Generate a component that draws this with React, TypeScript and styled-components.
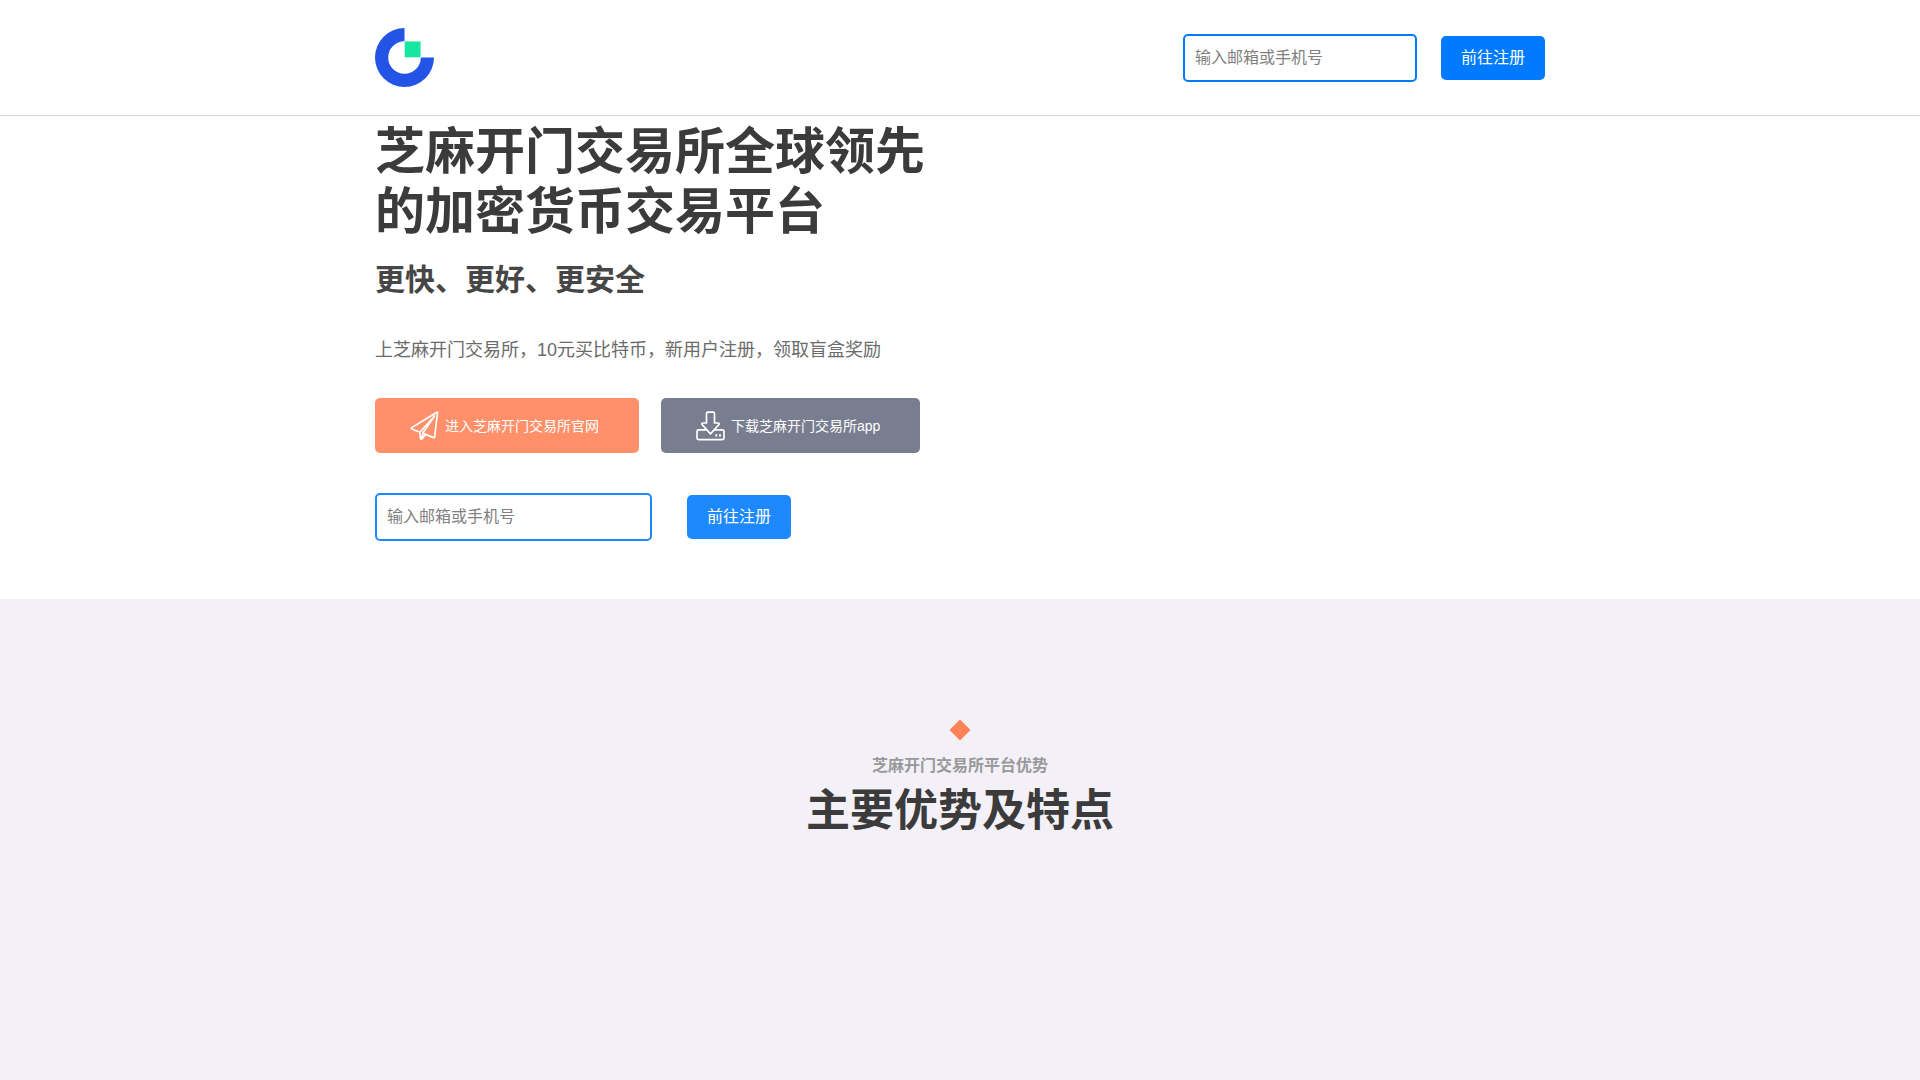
import React from "react";
import styled, { createGlobalStyle } from "styled-components";

const GlobalStyle = createGlobalStyle`
  *, *::before, *::after { box-sizing: border-box; }
  body {
    margin: 0;
    background: #fff;
    color: #3b3b3b;
    font-family: "Liberation Sans", "Noto Sans CJK SC", sans-serif;
    font-size: 16px;
    line-height: 24px;
  }
  h1, h2, h3, p { margin: 0; }
`;

const Page = styled.div`
  display: flex;
  flex-direction: column;
  min-height: 100vh;
`;

const Main = styled.main`
  display: flex;
  flex: 1;
  flex-direction: column;
`;

const Container = styled.div`
  width: 100%;
  max-width: 1200px;
  margin: 0 auto;
  padding: 0 15px;
`;

const Header = styled.header`
  border-bottom: 1px solid #d9d9d9;
`;

const HeaderBar = styled(Container)`
  display: flex;
  align-items: center;
  justify-content: space-between;
  min-height: 115px;
`;

const LogoLink = styled.a`
  display: block;
  line-height: 0;
`;

const SignupForm = styled.form<{ $gap: number }>`
  display: flex;
  align-items: center;
  gap: ${(p) => p.$gap}px;
`;

const AccountInput = styled.input<{ $width: number; $tone: string }>`
  width: ${(p) => p.$width}px;
  height: 48px;
  padding: 10px;
  border: 2px solid ${(p) => p.$tone};
  border-radius: 5px;
  background: #fff;
  font: inherit;
  outline: none;
  &::placeholder { color: #808080; opacity: 1; }
`;

const SubmitButton = styled.button<{ $tone: string }>`
  padding: 10px 20px;
  border: 0;
  border-radius: 5px;
  background: ${(p) => p.$tone};
  color: #fff;
  font: inherit;
  cursor: pointer;
`;

const Hero = styled.section`
  padding: 6px 0 58px;
`;

const HeroText = styled.div`
  display: flex;
  flex-direction: column;
  width: 50%;
  min-width: 570px;
`;

const HeroTitle = styled.h1`
  font-size: 50px;
  line-height: 60px;
  font-weight: 700;
`;

const HeroSubtitle = styled.h3`
  margin-top: 20px;
  font-size: 30px;
  line-height: 36px;
  font-weight: 700;
  color: #464646;
`;

const HeroLead = styled.p`
  margin: 38px 0 34px;
  font-size: 18px;
  line-height: 28px;
  color: #6b6b6b;
`;

const ActionRow = styled.div`
  display: flex;
  gap: 22px;
  margin-bottom: 40px;
`;

const ActionLink = styled.a<{ $tone: string }>`
  display: flex;
  align-items: center;
  gap: 6px;
  height: 55px;
  padding: 0 40px 0 35px;
  border-radius: 5px;
  background: ${(p) => p.$tone};
  color: #fff;
  font-size: 14px;
  text-decoration: none;
  white-space: nowrap;
`;

const Features = styled.section`
  display: flex;
  flex: 1;
  flex-direction: column;
  align-items: center;
  padding: 120px 15px;
  background: #f3f0f8;
  text-align: center;
`;

const Diamond = styled.svg`
  display: block;
  margin-bottom: 13px;
`;

const FeaturesLabel = styled.p`
  font-weight: 700;
  color: #999;
`;

const FeaturesTitle = styled.h2`
  margin-top: 6px;
  font-size: 44px;
  line-height: 54px;
  font-weight: 700;
`;

const Logo = () => (
  <svg width="59" height="59" viewBox="0 0 59 59" role="img" aria-label="Gate">
    <path
      fill="#2354e6"
      d="M29.5 0A29.5 29.5 0 1 0 59 29.5H45.8A16.3 16.3 0 1 1 29.5 13.2Z"
    />
    <path fill="#17e6a1" stroke="#fff" strokeWidth=".4" d="M29.5 13.2h16.3v16.3H29.5z" />
  </svg>
);

const PlaneIcon = () => (
  <svg width="29" height="30" viewBox="0 0 29 30" fill="none" stroke="#fff" strokeWidth="1.7" strokeLinejoin="round" strokeLinecap="round" aria-hidden="true">
    <path d="M27.2 1.2Q27.6 1.2 27.5 2L24.6 26Q24.4 27 23.5 26.6L15.6 23.4 12 27.9Q10.6 29 10.3 27.2L9.9 21.2 1.8 18Q.8 17.4 1.8 16.6L26.4 1.5Q27 1.1 27.2 1.2Z" />
    <path d="M24.5 5 9.9 21.2M24.5 5 13.2 21.6 11.4 27.5M13.2 22.3 15.6 23.4" />
  </svg>
);

const DownloadIcon = () => (
  <svg width="29" height="30" viewBox="0 0 29 30" fill="none" stroke="#fff" strokeWidth="1.7" strokeLinejoin="round" strokeLinecap="round" aria-hidden="true">
    <path d="M12 1.2h5a1.5 1.5 0 0 1 1.5 1.5V12h3.8a.9.9 0 0 1 .7 1.5l-8.5 9.4L6 13.5a.9.9 0 0 1 .7-1.5h3.8V2.7A1.5 1.5 0 0 1 12 1.2Z" />
    <path d="M10.3 18.8H2.6A1.6 1.6 0 0 0 1 20.4V27a1.6 1.6 0 0 0 1.6 1.6h23.8A1.6 1.6 0 0 0 28 27v-6.6a1.6 1.6 0 0 0-1.6-1.6h-7.7" />
    <path d="M20.3 24.1v.7M24 24.1v.7" strokeWidth="2" />
  </svg>
);

interface SignupProps {
  id: string;
  width: number;
  gap: number;
  tone: string;
}

const Signup = ({ id, width, gap, tone }: SignupProps) => (
  <SignupForm $gap={gap} onSubmit={(e) => e.preventDefault()}>
    <AccountInput id={id} type="text" placeholder="输入邮箱或手机号" aria-label="输入邮箱或手机号" $width={width} $tone={tone} />
    <SubmitButton type="submit" $tone={tone}>前往注册</SubmitButton>
  </SignupForm>
);

export default function App() {
  return (
    <Page>
      <GlobalStyle />
      <Header>
        <HeaderBar>
          <LogoLink href="#"><Logo /></LogoLink>
          <Signup id="header-account" width={234} gap={24} tone="#007bff" />
        </HeaderBar>
      </Header>
      <Main>
        <Hero>
          <Container>
            <HeroText>
              <HeroTitle>芝麻开门交易所全球领先的加密货币交易平台</HeroTitle>
              <HeroSubtitle>更快、更好、更安全</HeroSubtitle>
              <HeroLead>上芝麻开门交易所，10元买比特币，新用户注册，领取盲盒奖励</HeroLead>
              <ActionRow>
                <ActionLink href="#" $tone="#ff906a"><PlaneIcon />进入芝麻开门交易所官网</ActionLink>
                <ActionLink href="#" $tone="#787d8f"><DownloadIcon />下载芝麻开门交易所app</ActionLink>
              </ActionRow>
              <Signup id="hero-account" width={277} gap={35} tone="#1e89ff" />
            </HeroText>
          </Container>
        </Hero>
        <Features>
          <Diamond width="22" height="22" viewBox="0 0 22 22" aria-hidden="true">
            <path fill="#ff8157" d="M11 .5 21.5 11 11 21.5.5 11Z" />
          </Diamond>
          <FeaturesLabel>芝麻开门交易所平台优势</FeaturesLabel>
          <FeaturesTitle>主要优势及特点</FeaturesTitle>
        </Features>
      </Main>
    </Page>
  );
}
